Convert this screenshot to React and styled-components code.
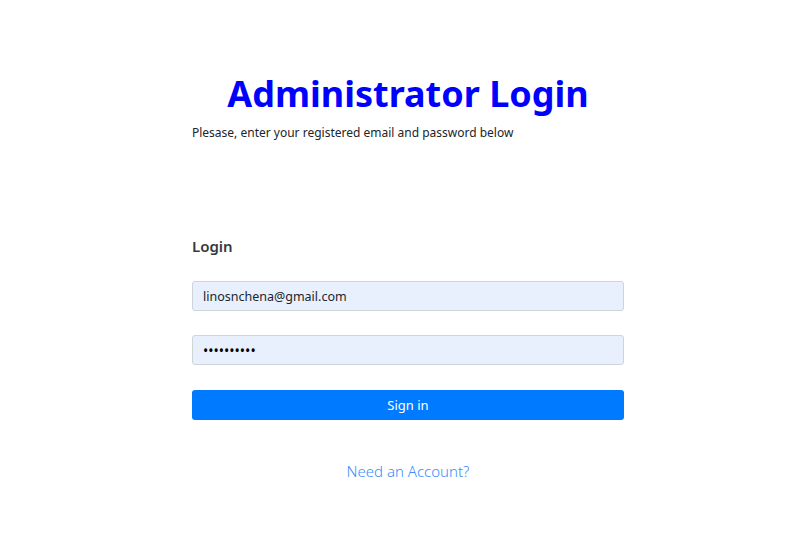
import React from 'react';
import styled, { createGlobalStyle } from 'styled-components';

const GlobalStyle = createGlobalStyle`
  body {
    margin: 0;
    background: #fff;
    font-family: "Noto Sans", "Open Sans", sans-serif;
    color: #212529;
  }
`;

const Page = styled.div`
  width: 432px;
  margin-left: 192px;
  padding-top: 66px;
`;

const Title = styled.h1`
  margin: 0;
  text-align: center;
  color: #0000ff;
  font-size: 36px;
  font-weight: 700;
  line-height: 56px;
`;

const Subtitle = styled.p`
  margin: 2px 0 0;
  font-size: 12px;
  line-height: 18px;
  color: #212529;
`;

const Form = styled.form`
  display: flex;
  flex-direction: column;
  margin-top: 93px;
`;

const Heading = styled.h5`
  margin: 0 0 24px;
  font-size: 15px;
  font-weight: 600;
  line-height: 22px;
  color: #343a40;
`;

const Input = styled.input`
  box-sizing: border-box;
  height: 30px;
  width: 100%;
  padding: 0 10px;
  margin-bottom: ${p => p.$gap || 24}px;
  border: 1px solid #ced4da;
  border-radius: 3px;
  background: #e8f0fe;
  font-family: inherit;
  font-size: 12.5px;
  color: #212529;
  outline: none;
  &[type='password'] {
    font-size: 14px;
    color: #000;
  }
`;

const Button = styled.button`
  height: 30px;
  border: none;
  border-radius: 3px;
  background: #007bff;
  color: #fff;
  font-family: inherit;
  font-size: 13px;
  cursor: pointer;
`;

const Link = styled.a`
  display: block;
  margin-top: 41px;
  text-align: center;
  color: #3d8bff;
  font-size: 15px;
  font-weight: 300;
  text-decoration: none;
`;

export default function App() {
  return (
    <>
      <GlobalStyle />
      <Page>
        <Title>Administrator Login</Title>
        <Subtitle>Plesase, enter your registered email and password below</Subtitle>
        <Form onSubmit={e => e.preventDefault()}>
          <Heading>Login</Heading>
          <Input type="email" defaultValue="linosnchena@gmail.com" />
          <Input type="password" defaultValue="1234567890" $gap={25} />
          <Button type="submit">Sign in</Button>
        </Form>
        <Link href="#">Need an Account?</Link>
      </Page>
    </>
  );
}
